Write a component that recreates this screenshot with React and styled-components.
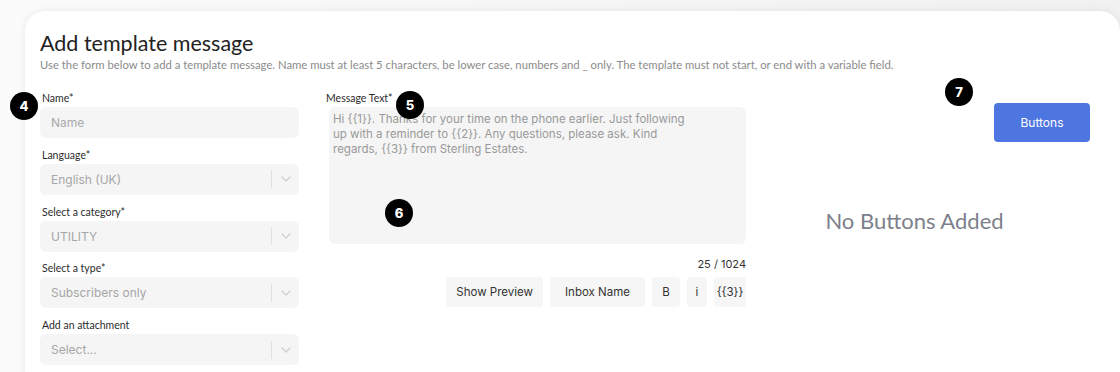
import styled, { createGlobalStyle } from "styled-components";

const GlobalStyle = createGlobalStyle`
  html, body {
    margin: 0;
    padding: 0;
    background: #f3f3f3;
  }
  body {
    font-family: "Lato", "Liberation Sans", sans-serif;
    -webkit-font-smoothing: antialiased;
  }
`;

const Page = styled.div`
  width: 1120px;
  height: 372px;
  overflow: hidden;
  padding: 11px 0 0 25px;
  box-sizing: border-box;
  background: linear-gradient(90deg, #fbfbfb 0%, #f1f1f1 100%);
`;

const Card = styled.section`
  position: relative;
  background: #fff;
  border-radius: 20px 20px 0 0;
  box-shadow: 0 0 8px rgba(0, 0, 0, 0.08);
  height: 400px;
  padding: 19px 30px 0 15px;
  box-sizing: border-box;
`;

const Title = styled.h1`
  margin: 0;
  font-size: 21.5px;
  font-weight: 400;
  color: #222;
  line-height: 26px;
`;

const Subtitle = styled.p`
  margin: 2px 0 0;
  font-size: 11.3px;
  color: #8b8b8b;
  line-height: 14px;
`;

const Columns = styled.div`
  display: grid;
  grid-template-columns: 259px 420px 1fr;
  column-gap: 27px;
  margin-top: 20px;
  align-items: start;
`;

const Column = styled.div`
  display: flex;
  flex-direction: column;
`;

const Field = styled.div`
  display: flex;
  flex-direction: column;
  margin-bottom: 10.8px;
`;

const Label = styled.label`
  font-size: 10.5px;
  color: #2c2c2c;
  line-height: 13px;
  margin: 0 0 2px ${({ $shift }) => $shift || 0}px;
`;

const Input = styled.input`
  height: 31px;
  box-sizing: border-box;
  border: none;
  border-radius: 6px;
  background: #f5f5f5;
  padding: 0 11px;
  font-family: "Inter", "Noto Sans", sans-serif;
  font-size: 12px;
  color: #333;
  outline: none;
  &::placeholder {
    color: #a9a9a9;
  }
`;

const SelectBox = styled.div`
  height: 31px;
  box-sizing: border-box;
  border-radius: 6px;
  background: #f5f5f5;
  display: flex;
  align-items: center;
  padding-left: 11px;
`;

const SelectValue = styled.span`
  flex: 1;
  font-family: "Inter", "Noto Sans", sans-serif;
  font-size: 12px;
  color: #a6a6a6;
`;

const Separator = styled.span`
  width: 1px;
  height: 18px;
  background: #e0e0e0;
`;

const Chevron = styled.span`
  width: 27px;
  display: flex;
  justify-content: center;
  align-items: center;
  color: #cfcfcf;
`;

const MessageArea = styled.textarea`
  margin-left: 3px;
  height: 137px;
  box-sizing: border-box;
  border: none;
  border-radius: 6px;
  background: #f5f5f5;
  padding: 5px 4px;
  resize: none;
  font-family: "Inter", "Noto Sans", sans-serif;
  font-size: 11.5px;
  line-height: 15px;
  color: #999;
  outline: none;
  overflow: hidden;
`;

const Counter = styled.div`
  text-align: right;
  font-family: "Inter", "Noto Sans", sans-serif;
  font-size: 11px;
  color: #333;
  margin-top: 13px;
  line-height: 14px;
`;

const Toolbar = styled.div`
  display: flex;
  justify-content: flex-end;
  gap: 7px;
  margin-top: 6px;
`;

const ToolButton = styled.button`
  height: 30px;
  min-width: ${({ $w }) => $w || 0}px;
  border: none;
  border-radius: 4px;
  background: #f6f6f6;
  padding: 0 ${({ $pad }) => ($pad === undefined ? 10 : $pad)}px;
  font-family: "Inter", "Noto Sans", sans-serif;
  font-size: 11.5px;
  font-weight: 400;
  color: #333;
  cursor: pointer;
`;

const RightPane = styled.div`
  display: flex;
  flex-direction: column;
  align-items: center;
`;

const PrimaryButton = styled.button`
  align-self: flex-end;
  width: 96px;
  height: 39px;
  margin-top: 11px;
  border: none;
  border-radius: 4px;
  background: #4e76e0;
  color: #fff;
  font-family: "Inter", "Noto Sans", sans-serif;
  font-size: 12px;
  cursor: pointer;
`;

const EmptyText = styled.div`
  margin: 65px 34px 0 0;
  font-size: 22px;
  line-height: 27px;
  color: #7d808b;
`;

const Badge = styled.span`
  position: absolute;
  left: ${({ $x }) => $x}px;
  top: ${({ $y }) => $y}px;
  width: 28px;
  height: 28px;
  border-radius: 50%;
  background: #000;
  color: #fff;
  font-family: "Inter", "Noto Sans", sans-serif;
  font-weight: 800;
  font-size: 13px;
  display: flex;
  align-items: center;
  justify-content: center;
`;

const ChevronIcon = () => (
  <svg width="10" height="6" viewBox="0 0 10 6" fill="none">
    <path d="M1 1l4 4 4-4" stroke="currentColor" strokeWidth="1.4" strokeLinecap="round" strokeLinejoin="round" />
  </svg>
);

const Select = ({ value }) => (
  <SelectBox>
    <SelectValue>{value}</SelectValue>
    <Separator />
    <Chevron>
      <ChevronIcon />
    </Chevron>
  </SelectBox>
);

const message =
  "Hi {{1}}. Thanks for your time on the phone earlier. Just following\nup with a reminder to {{2}}. Any questions, please ask. Kind\nregards, {{3}} from Sterling Estates.";

const App = () => {
  return (
    <Page>
      <GlobalStyle />
      <Card>
        <Title>Add template message</Title>
        <Subtitle>
          Use the form below to add a template message. Name must at least 5 characters, be lower case, numbers and _ only. The template must not start, or end with a variable field.
        </Subtitle>

        <Columns>
          <Column>
            <Field>
              <Label $shift={2}>Name*</Label>
              <Input placeholder="Name" />
            </Field>
            <Field>
              <Label $shift={2}>Language*</Label>
              <Select value="English (UK)" />
            </Field>
            <Field>
              <Label $shift={2}>Select a category*</Label>
              <Select value="UTILITY" />
            </Field>
            <Field>
              <Label $shift={2}>Select a type*</Label>
              <Select value="Subscribers only" />
            </Field>
            <Field>
              <Label $shift={2}>Add an attachment</Label>
              <Select value="Select..." />
            </Field>
          </Column>

          <Column>
            <Label>Message Text*</Label>
            <MessageArea defaultValue={message} />
            <Counter>25 / 1024</Counter>
            <Toolbar>
              <ToolButton $w={95}>Show Preview</ToolButton>
              <ToolButton $w={95}>Inbox Name</ToolButton>
              <ToolButton $w={28} $pad={0}>B</ToolButton>
              <ToolButton $w={20} $pad={0}>i</ToolButton>
              <ToolButton $w={32} $pad={0}>{"{{3}}"}</ToolButton>
            </Toolbar>
          </Column>

          <RightPane>
            <PrimaryButton>Buttons</PrimaryButton>
            <EmptyText>No Buttons Added</EmptyText>
          </RightPane>
        </Columns>

        <Badge $x={-15} $y={81}>4</Badge>
        <Badge $x={371} $y={80}>5</Badge>
        <Badge $x={360} $y={188}>6</Badge>
        <Badge $x={920} $y={67}>7</Badge>
      </Card>
    </Page>
  );
};

export default App;
